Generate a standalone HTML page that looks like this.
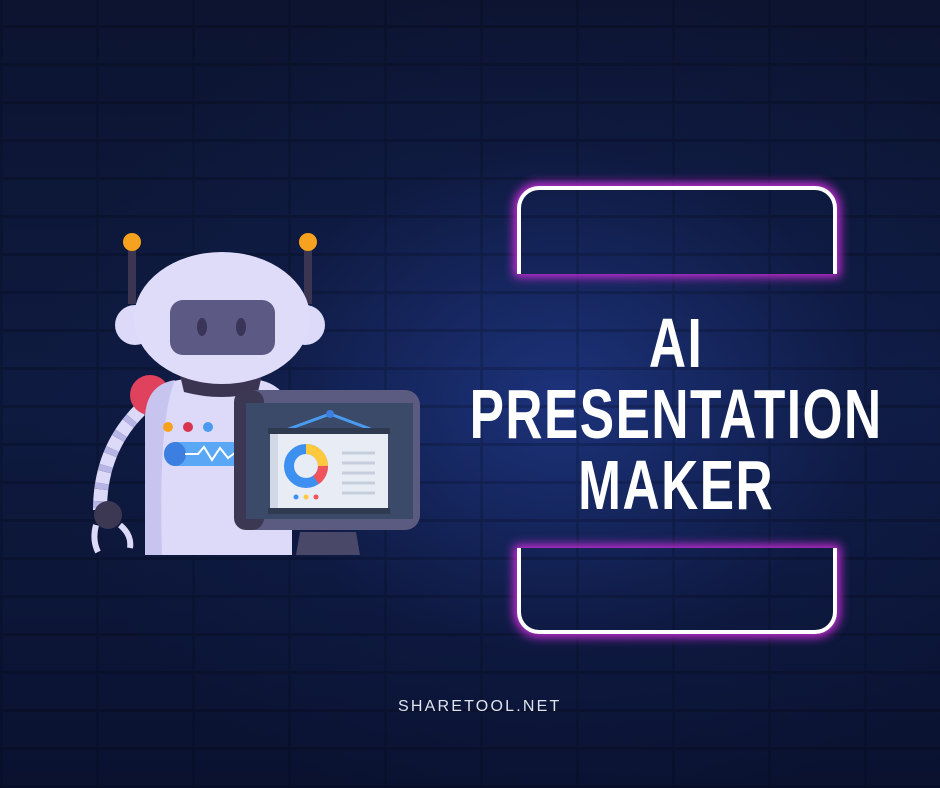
<!DOCTYPE html>
<html><head><meta charset="utf-8"><style>
html,body{margin:0;padding:0}
body{width:940px;height:788px;overflow:hidden;position:relative;background:#0b1229;font-family:"Liberation Sans",sans-serif}
.bg{position:absolute;inset:0;background:
radial-gradient(ellipse 520px 420px at 560px 400px,rgba(40,70,170,.55),rgba(20,35,90,.25) 60%,rgba(5,8,25,0) 100%),
linear-gradient(#0c1430,#0e1a40 50%,#0a1230);}
.bricks{position:absolute;inset:0;opacity:.18;background:
repeating-linear-gradient(0deg,rgba(0,0,0,.9) 0 3px,transparent 3px 38px),
repeating-linear-gradient(90deg,rgba(0,0,0,.7) 0 3px,transparent 3px 96px);}
.br{position:absolute;border:4px solid #fff;box-shadow:0 0 10px 3px #d22ee0;}
.t{position:absolute;left:180px;width:1350px;text-align:center;color:#fff;font-weight:bold;font-size:70px;line-height:70px;transform:scaleX(.735);transform-origin:0 0;letter-spacing:2px}
</style></head><body>
<div class="bg"></div><div class="bricks"></div>
<div class="br" style="left:517px;top:186px;width:312px;height:84px;border-bottom:none;border-radius:22px 22px 0 0"></div>
<div class="br" style="left:517px;top:548px;width:312px;height:82px;border-top:none;border-radius:0 0 22px 22px"></div>
<div class="t" style="top:308px">AI</div>
<div class="t" style="top:379px">PRESENTATION</div>
<div class="t" style="top:450px">MAKER</div>
<div style="position:absolute;left:398px;top:698px;color:#dfe3ee;font-size:16px;letter-spacing:2.2px">SHARETOOL.NET</div>
<svg width="940" height="788" style="position:absolute;left:0;top:0">
<rect x="128" y="248" width="8" height="56" fill="#3b3552"/>
<rect x="304" y="248" width="8" height="56" fill="#3b3552"/>
<circle cx="132" cy="242" r="9" fill="#f7a21e"/><circle cx="308" cy="242" r="9" fill="#f7a21e"/>
<path d="M140 410 Q100 450 100 510" stroke="#dcdaf8" stroke-width="14" fill="none" stroke-dasharray="12 6"/>
<path d="M140 410 Q100 450 100 510" stroke="#b7b4e6" stroke-width="14" fill="none" stroke-dasharray="6 12" stroke-dashoffset="-12"/>
<circle cx="108" cy="515" r="14" fill="#3c3854"/>
<path d="M96 525 Q92 540 98 552 M120 525 Q132 535 130 548" stroke="#dcdaf8" stroke-width="6" fill="none"/>
<circle cx="150" cy="395" r="20" fill="#e0415c"/>
<path d="M145 555 L145 420 Q145 378 200 378 L245 378 Q290 380 292 420 L292 555 Z" fill="#dcdaf8"/>
<path d="M145 555 L145 420 Q145 385 175 380 Q158 420 162 555 Z" fill="#c7c4f0"/>
<path d="M180 375 L262 375 L258 392 Q222 402 184 392 Z" fill="#3b3552"/>
<circle cx="135" cy="325" r="20" fill="#dcdaf8"/><circle cx="305" cy="325" r="20" fill="#dcdaf8"/>
<ellipse cx="222" cy="318" rx="88" ry="66" fill="#dfdcfa"/>
<rect x="170" y="300" width="105" height="55" rx="13" fill="#5c5a85"/>
<ellipse cx="202" cy="327" rx="5" ry="9" fill="#3a3558"/><ellipse cx="241" cy="327" rx="5" ry="9" fill="#3a3558"/>
<circle cx="168" cy="427" r="5" fill="#f7a21e"/><circle cx="188" cy="427" r="5" fill="#d8334f"/><circle cx="208" cy="427" r="5" fill="#4a9bf0"/>
<rect x="164" y="442" width="80" height="24" rx="12" fill="#5aa8f5"/>
<rect x="164" y="442" width="22" height="24" rx="12" fill="#3d7fe0"/>
<path d="M185 454 L198 454 L204 447 L212 460 L220 448 L228 458 L236 452" stroke="#fff" stroke-width="2" fill="none"/>
<path d="M300 532 L356 532 L360 555 L296 555 Z" fill="#4a4868"/>
<rect x="234" y="390" width="186" height="140" rx="15" fill="#5b5a80"/>
<rect x="234" y="390" width="30" height="140" rx="12" fill="#3c3854"/>
<rect x="246" y="403" width="167" height="116" fill="#3a4a68"/>
<path d="M286 430 L330 414 L373 430" stroke="#4a9bf0" stroke-width="3" fill="none"/>
<circle cx="330" cy="414" r="4" fill="#3d7fe0"/>
<rect x="270" y="432" width="118" height="78" fill="#e8ecf5"/>
<rect x="270" y="432" width="8" height="78" fill="#d3d8e6"/>
<rect x="268" y="428" width="122" height="6" fill="#2f3a50"/>
<rect x="268" y="508" width="122" height="6" fill="#2f3a50"/>
<circle cx="306" cy="466" r="17" fill="none" stroke="#3d8ff0" stroke-width="10"/>
<path d="M306 449 A17 17 0 0 1 323 466" fill="none" stroke="#ffc93e" stroke-width="10"/>
<path d="M323 466 A17 17 0 0 1 316 480" fill="none" stroke="#f0545a" stroke-width="10"/>
<g stroke="#c6cedb" stroke-width="3"><path d="M342 453H375M342 463H375M342 473H375M342 483H375M342 493H375"/></g>
<circle cx="296" cy="497" r="2.5" fill="#3d8ff0"/><circle cx="306" cy="497" r="2.5" fill="#ffc93e"/><circle cx="316" cy="497" r="2.5" fill="#f0545a"/>
</svg>
</body></html>
